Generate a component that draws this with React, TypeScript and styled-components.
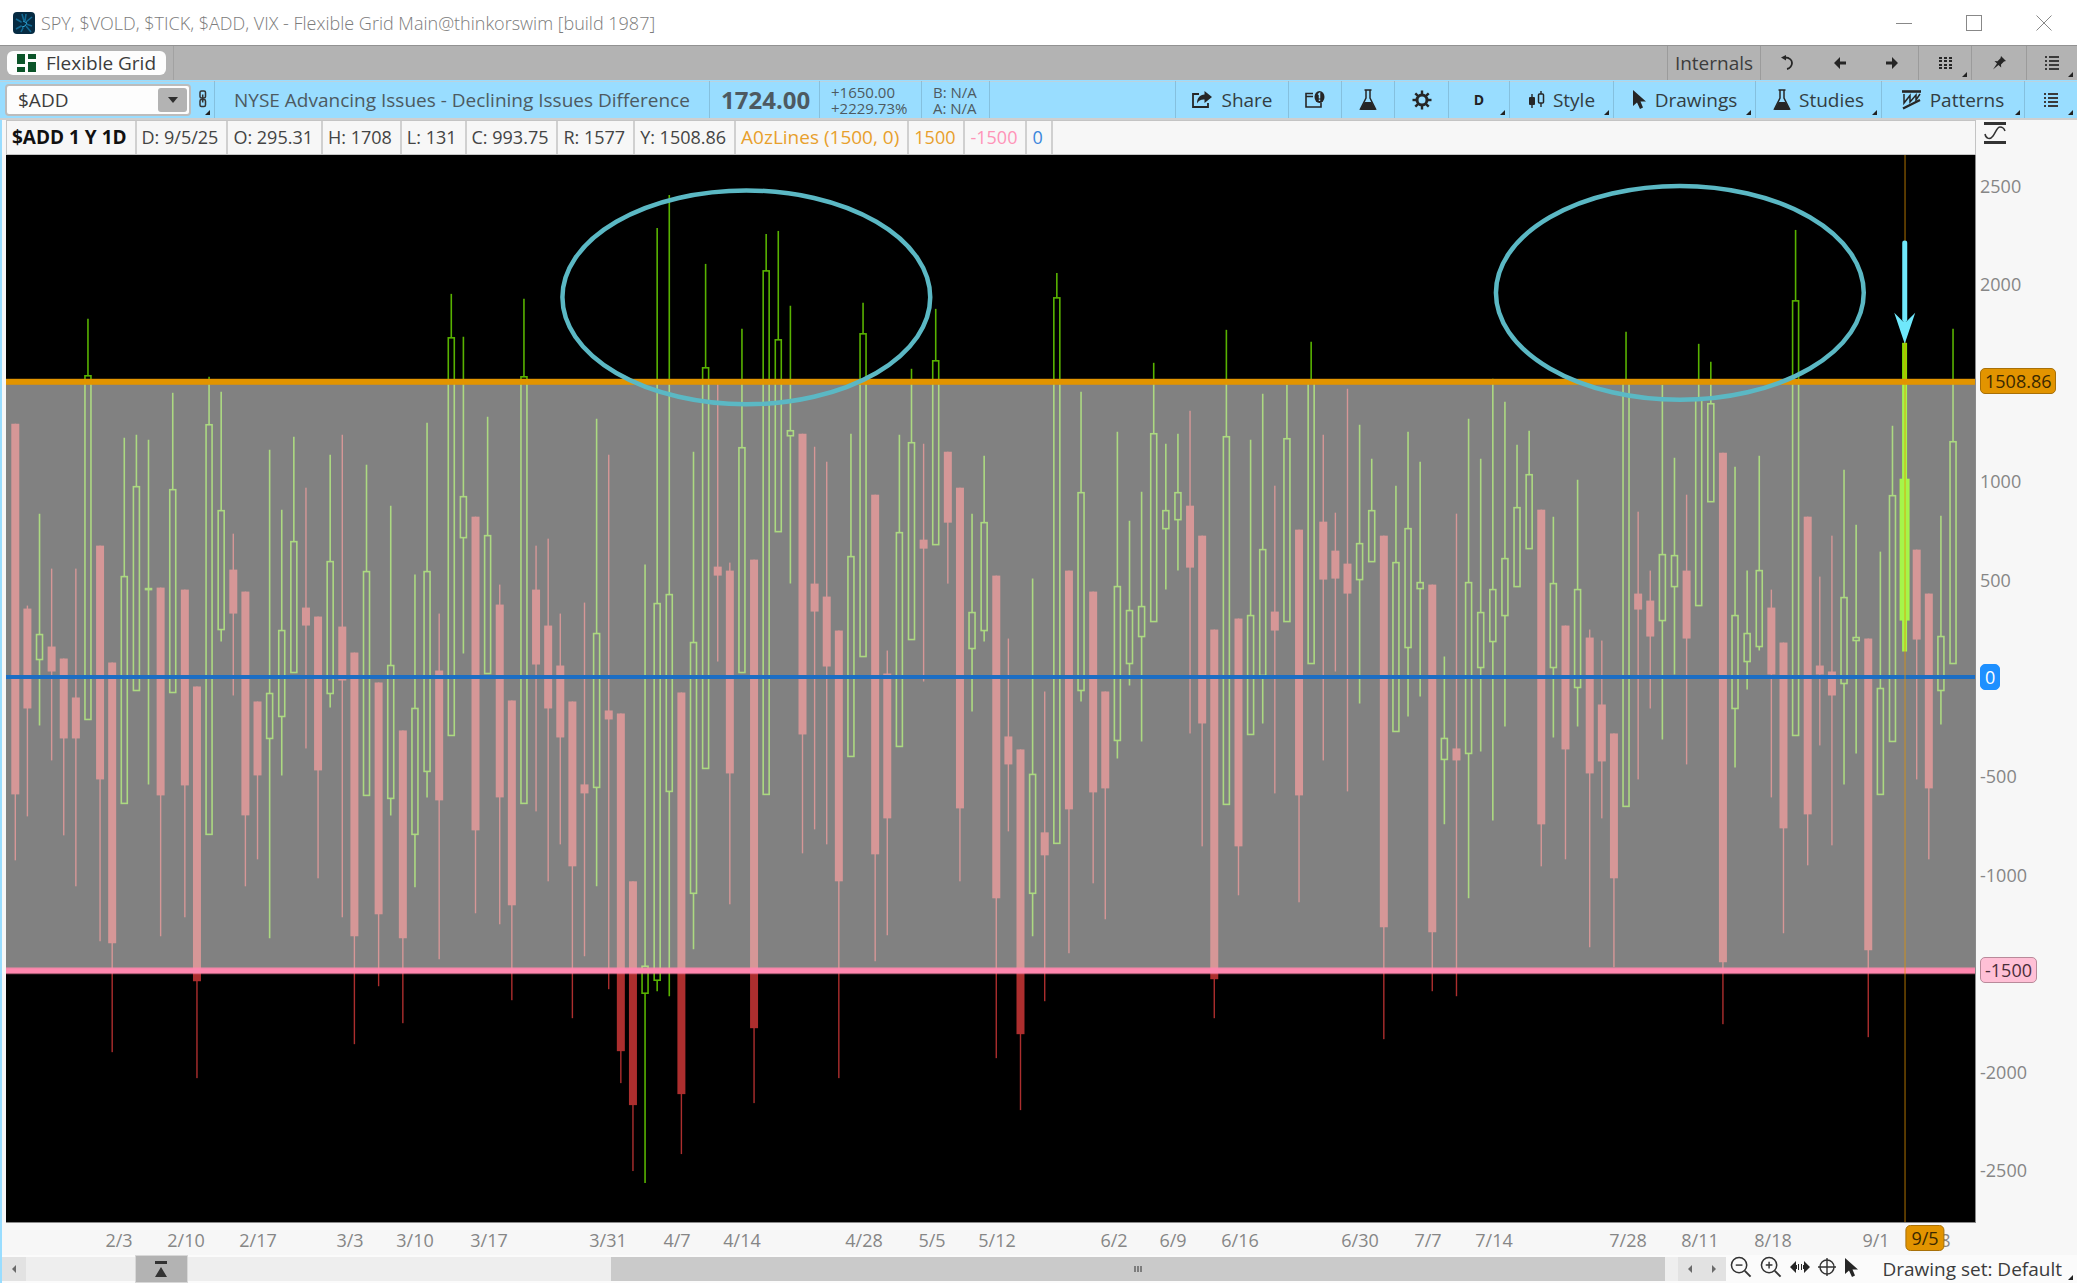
import React from "react";
import styled, { createGlobalStyle } from "styled-components";

const Global = createGlobalStyle`
  * { box-sizing: border-box; }
  html, body { margin: 0; height: 100%; }
  body { font-family: "Open Sans", "Noto Sans", sans-serif; font-size: 19px; color: #3c3c3c; background: #f7f7f7; overflow: hidden; }
  button, input { font: inherit; color: inherit; margin: 0; padding: 0; border: 0; background: none; }
  svg { display: block; flex: none; }
`;

const Window = styled.div`
  display: grid;
  grid-template-rows: 45px 35px 40px minmax(0, 1fr) 28px;
  height: 100vh;
`;

const TitleBar = styled.header`
  display: flex;
  align-items: center;
  padding: 0 25px 0 13px;
  gap: 6px;
  background: #fff;
  color: #7c7c7c;
`;
const Title = styled.h1`
  flex: 1;
  margin: 0;
  font-size: 18px;
  font-weight: 300;
  white-space: nowrap;
`;
const WindowButtons = styled.div`
  display: flex;
  gap: 54px;
  button { display: flex; }
`;

const TabBar = styled.nav`
  display: flex;
  background: #b3b3b3;
  border-top: 1px solid #929292;
`;
const TabHolder = styled.div`
  display: flex;
  align-items: center;
  padding: 0 7px;
  border-right: 1px solid #a2a2a2;
`;
const Tab = styled.button`
  display: flex;
  align-items: center;
  gap: 10px;
  height: 24px;
  padding: 0 10px;
  border-radius: 6px;
  background: #fdfdfd;
  line-height: 24px;
`;
const Spacer = styled.div`
  flex: 1;
`;
const BarButton = styled.button<{ $w: number; $line?: boolean }>`
  position: relative;
  display: flex;
  align-items: center;
  justify-content: center;
  width: ${(p) => p.$w}px;
  border-left: 1px solid ${(p) => (p.$line ? "rgba(0,0,0,0.13)" : "transparent")};
  white-space: nowrap;
`;
const Corner = styled.span`
  position: absolute;
  right: 4px;
  bottom: 3px;
  width: 0;
  height: 0;
  border-left: 5px solid transparent;
  border-bottom: 5px solid #222;
`;

const Toolbar = styled.div`
  display: flex;
  background: #99ddff;
  border-top: 1px solid #99ddff;
  border-bottom: 2px solid #cfcfcf;
  box-shadow: inset 0 1px 0 #b9d3e0;
`;
const SymbolBox = styled.div`
  display: flex;
  align-self: center;
  width: 186px;
  height: 32px;
  margin-left: 5px;
  padding: 2px;
  border: 2px solid #bcbcbc;
  border-radius: 4px;
  background: #fdfdfd;
  input { flex: 1; width: 0; padding-left: 9px; outline: 0; }
  button { display: grid; place-items: center; width: 29px; border-radius: 3px; background: #b3b3b3; }
`;
const Quote = styled.div<{ $w: number; $size?: number; $bold?: boolean }>`
  display: flex;
  flex-direction: column;
  justify-content: center;
  width: ${(p) => p.$w}px;
  padding-left: ${(p) => (p.$w > 300 ? 19 : 11)}px;
  border-left: 1px solid rgba(0, 0, 0, 0.13);
  font-size: ${(p) => p.$size ?? 19}px;
  font-weight: ${(p) => (p.$bold ? 700 : 400)};
  line-height: ${(p) => (p.$size === 15 ? "16px" : "32px")};
  white-space: nowrap;
  color: #4d5a61;
`;
const Tools = styled.div`
  display: flex;
`;
const Label = styled.span`
  margin-left: 8px;
  color: #333d42;
`;

const Body = styled.main`
  display: grid;
  grid-template-columns: minmax(0, 1fr) 101px;
  grid-template-rows: 35px minmax(0, 1fr) 32px;
  padding-left: 4px;
  border-left: 2px solid #99ddff;
  font-size: 18px;
`;
const Legend = styled.div`
  display: flex;
  border: 1px solid #c4c4c4;
`;
const LegendCell = styled.span<{ $color?: string; $bold?: boolean; $wide?: boolean }>`
  padding: 0 8px 0 5px;
  border-right: 2px solid #d0d0d0;
  line-height: 33px;
  font-size: ${(p) => (p.$wide ? 19 : 18)}px;
  color: ${(p) => p.$color ?? "#444"};
  font-weight: ${(p) => (p.$bold ? 700 : 400)};
  white-space: nowrap;
`;
const AxisHead = styled.div`
  padding: 2px 0 0 8px;
`;
const Plot = styled.div`
  border: 0 solid #8a8a8a;
  border-width: 0 1px 1px 0;
  background: #000;
  min-height: 0;
  svg { width: 100%; height: 100%; }
`;
const PriceAxis = styled.div`
  position: relative;
`;
const DateAxis = styled.div`
  position: relative;
  grid-column: 1 / -1;
`;
const Tick = styled.span`
  position: absolute;
  left: 4px;
  transform: translateY(-50%);
  line-height: 24px;
  color: #868686;
`;
const Badge = styled(Tick)<{ $bg: string; $fg: string; $edge: string }>`
  padding: 0 4px;
  border: 1px solid ${(p) => p.$edge};
  border-radius: 5px;
  background: ${(p) => p.$bg};
  color: ${(p) => p.$fg};
`;
const DateTick = styled.span`
  position: absolute;
  top: 5px;
  transform: translateX(-50%);
  line-height: 24px;
  color: #868686;
`;
const DateBadge = styled(DateTick)`
  top: 2px;
  padding: 0 5px;
  border: 1px solid #a87008;
  border-radius: 5px;
  background: #e29400;
  color: #3a2800;
`;

const Footer = styled.footer`
  display: flex;
  align-items: center;
  border-left: 2px solid #99ddff;
  background: #fbfbfb;
`;
const ScrollEnd = styled.button`
  display: grid;
  place-items: center;
  width: 24px;
  height: 24px;
  background: #e2e2e2;
`;
const Track = styled.div`
  display: flex;
  flex: 1;
  height: 24px;
  background: #eee;
`;
const Gap = styled.div<{ $grow: number }>`
  flex: ${(p) => p.$grow} 0 0;
`;
const PaneButton = styled.button`
  display: grid;
  place-items: center;
  align-self: center;
  width: 53px;
  height: 28px;
  border: 1px solid #d8d8d8;
  background: #b3b3b3;
`;
const Thumb = styled.div`
  display: flex;
  flex: 1056 0 0;
  align-items: center;
  justify-content: center;
  gap: 1px;
  background: #cacaca;
  i { width: 2px; height: 6px; background: #7d7d7d; }
`;
const FooterTools = styled.div`
  display: flex;
  align-items: center;
  gap: 8px;
  padding: 0 23px 4px 4px;
`;
const DrawingSet = styled.button`
  position: relative;
  height: 28px;
  padding-right: 15px;
  line-height: 28px;
  white-space: nowrap;
`;

/* ---------- icons ---------- */

const INK = "#262626";

const AppLogo = () => (
  <svg width="22" height="22" viewBox="0 0 22 22">
    <rect width="22" height="22" rx="4" fill="#062b42" />
    <path d="M11 9 9 2M12 9l1-7M10 11 3 7M13 10l6-5M10 13l-7 4M11 14l-3 6M13 12l6 2M13 14l5 6" stroke="#126a94" strokeWidth="1.6" />
    <path d="M9 8l6 3-4 5-3-3z" fill="#062b42" />
    <path d="M10 9l4 2-2 3-3 1" stroke="#2fa6d6" strokeWidth="1" fill="none" />
  </svg>
);
const GridLogo = () => (
  <svg width="19" height="18" viewBox="0 0 19 18">
    <path fill="#0b5429" d="M0 0h8v10H0zM11 0h8v5h-8zM11 8h8v10h-8zM0 13h8v5H0z" />
  </svg>
);
const Undo = () => (
  <svg width="14" height="16" viewBox="0 0 14 16">
    <path d="M5 2.5c5 0 7 3 7 5.500s-2 5.500-5 6" fill="none" stroke={INK} strokeWidth="1.800" />
    <path d="M1 2.500 6 0v5.500z" fill={INK} />
  </svg>
);
const Arrow = ({ right }: { right?: boolean }) => (
  <svg width="14" height="12" viewBox="0 0 14 12">
    <path d={right ? "M13 6 7 0v4.500H1v3h6V12z" : "M1 6l6-6v4.500h6v3H7V12z"} fill={INK} />
  </svg>
);
const Dots = () => (
  <svg width="13" height="13" viewBox="0 0 13 13" fill={INK}>
    {[0, 5, 10].map((x) => [0, 3, 7, 10].map((y) => <rect key={`${x}-${y}`} x={x} y={y} width="3" height="2" />))}
  </svg>
);
const Pin = () => (
  <svg width="14" height="14" viewBox="0 0 14 14">
    <path d="M9 0l5 5-2 .5-3 3 .2 3L6.500 9 1 13.500 5 7.500 2.500 5l3 .2 3-3z" fill={INK} />
  </svg>
);
const ListIcon = () => (
  <svg width="15" height="14" viewBox="0 0 15 14" fill="#3a3a3a">
    {[0, 4, 8, 12].map((y) => (
      <g key={y}>
        <rect x="0" y={y} width="2" height="2" />
        <rect x="4" y={y} width="10" height="2" />
      </g>
    ))}
  </svg>
);
const Link = () => (
  <svg width="10" height="20" viewBox="0 0 10 20" fill="none" stroke="#333" strokeWidth="1.500">
    <rect x="2" y="1" width="5.500" height="7" rx="1.500" />
    <rect x="2" y="9.500" width="5.500" height="7" rx="1.500" />
    <path d="M4.700 4.500v8" />
  </svg>
);
const Share = () => (
  <svg width="22" height="18" viewBox="0 0 22 18">
    <path d="M8 3H2v13h15v-4" fill="none" stroke={INK} strokeWidth="1.800" />
    <path d="M13.500 0 21 6l-7.500 6V8.500C10 8.300 7.500 9.500 6 12.500 6 7 9 3.800 13.500 3.500z" fill={INK} />
  </svg>
);
const Alert = () => (
  <svg width="22" height="18" viewBox="0 0 22 18">
    <path d="M9 2.500H2v13.500h15v-4.500M2 5.500h7" fill="none" stroke={INK} strokeWidth="1.600" />
    <ellipse cx="15.500" cy="6" rx="5" ry="6" fill={INK} />
    <path d="M14 3.500l1.500-1V7.500M15.500 8.500V10" fill="none" stroke="#99ddff" strokeWidth="1.500" />
  </svg>
);
const Flask = () => (
  <svg width="18" height="22" viewBox="0 0 18 22">
    <path d="M5.500 1h7M7 1v8l-5.500 11h15L11 9V1" fill="none" stroke={INK} strokeWidth="1.500" />
    <path d="M5.500 13h7L17 21H1z" fill={INK} />
  </svg>
);
const Gear = () => (
  <svg width="20" height="20" viewBox="0 0 20 20">
    <circle cx="10" cy="10" r="5" fill="none" stroke={INK} strokeWidth="3" />
    {[0, 45, 90, 135, 180, 225, 270, 315].map((a) => (
      <rect key={a} x="8.800" y=".5" width="2.400" height="4.500" fill={INK} transform={`rotate(${a} 10 10)`} />
    ))}
  </svg>
);
const DayGlyph = styled.b`
  font-size: 14px;
  color: #222;
`;
const StyleIcon = () => (
  <svg width="17" height="18" viewBox="0 0 17 18">
    <path d="M4 3v14M13 0v3m0 9v4" stroke={INK} strokeWidth="1.400" />
    <rect x="1" y="6" width="6" height="8" rx="1" fill={INK} />
    <rect x="10.500" y="3" width="5" height="9" rx="1" fill="none" stroke={INK} strokeWidth="1.500" />
  </svg>
);
const Cursor = () => (
  <svg width="15" height="19" viewBox="0 0 15 19">
    <path d="M1 0v16l4-3.500L8 19l3-1.500L8.500 11.500H14z" fill={INK} />
  </svg>
);
const PatternsIcon = () => (
  <svg width="20" height="20" viewBox="0 0 20 20" fill="none" stroke={INK}>
    <path d="M0 1.500h19" strokeWidth="2.600" />
    <path d="M2 4v9L8 5.500v6.500L14 5v5l4-6" strokeWidth="1.500" />
    <path d="M1 18.500 18 10" strokeWidth="2.400" />
  </svg>
);
const ScaleIcon = () => (
  <svg width="22" height="22" viewBox="0 0 22 22" fill="none" stroke="#333">
    <path d="M0 1.500h22M0 20.500h22" strokeWidth="3" />
    <path d="M1 12c1 5 5 6 8 2s4-9 7-9 4 1 5 4" strokeWidth="1.500" />
  </svg>
);
const Zoom = ({ plus }: { plus?: boolean }) => (
  <svg width="22" height="22" viewBox="0 0 23 23" fill="none" stroke="#333">
    <circle cx="9.500" cy="9.500" r="8" strokeWidth="1.600" />
    <path d="m15.500 15.500 6 6" strokeWidth="2" />
    <path d={plus ? "M6 9.500h7M9.500 6v7" : "M6 9.500h7"} strokeWidth="1.500" />
  </svg>
);
const Expand = () => (
  <svg width="20" height="12" viewBox="0 0 20 12" fill={INK}>
    <path d="M0 6l6-6v12zM20 6l-6-6v12zM6 4h1v4H6zM8 3h1v6H8zM11 3h1v6h-1zM13 4h1v4h-1z" />
  </svg>
);
const Crosshair = () => (
  <svg width="18" height="18" viewBox="0 0 18 18" fill="none" stroke="#333" strokeWidth="1.400">
    <circle cx="9" cy="9" r="7" />
    <path d="M9 0v18M0 9h18" />
  </svg>
);
const Triangle = ({ d, fill }: { d: string; fill?: string }) => (
  <svg width="12" height="12" viewBox="0 0 12 12">
    <path d={d} fill={fill ?? "#2e2e2e"} />
  </svg>
);

/* ---------- chart data ---------- */

/* colour, then high, body top, body bottom, low as plot ordinates */
const CANDLES = `
r 424 424 795 861|r 606 609 709 817|g 514 635 660 726|r 569 647 672 761|r 659 659 739 836|r 569 698 739 887
g 319 376 720 720|r 546 546 780 942|r 663 663 944 1053|g 438 577 804 804|g 435 487 691 691|g 440 589 590 785
r 588 588 796 937|g 393 490 693 693|r 590 590 786 918|r 687 687 982 1079|g 377 425 835 835|g 392 511 630 642
r 534 570 614 696|r 592 592 816 887|r 702 702 776 860|g 450 694 739 939|g 510 631 717 776|g 437 542 673 673
r 488 608 626 749|r 617 617 771 879|g 455 562 694 708|r 435 627 681 918|r 653 653 937 1045|g 465 572 796 796
r 683 683 915 987|g 506 666 799 816|r 731 731 939 1024|g 575 709 835 888|g 423 572 772 798|r 614 671 801 960
g 294 338 736 736|g 337 497 538 654|r 517 517 831 914|g 417 536 674 674|r 585 605 798 925|r 701 701 906 1001
g 299 377 804 804|r 546 590 665 812|r 539 626 709 882|r 614 666 738 845|r 702 702 867 1019|r 603 785 794 957
g 419 634 788 887|r 455 711 720 990|r 714 714 1052 1084|r 882 882 1106 1172|g 565 967 994 1184|g 228 604 981 992
g 195 595 792 997|r 693 693 1095 1155|g 452 643 894 950|g 264 368 769 769|r 383 567 576 662|r 563 571 774 905
g 329 448 673 673|r 560 560 1029 1104|g 234 271 795 795|g 231 340 532 532|g 306 431 436 584|r 434 434 735 854
r 447 584 612 830|r 462 597 667 845|r 631 631 882 1079|g 434 557 757 757|g 303 334 657 657|r 495 495 855 962
r 651 674 819 936|g 435 533 747 747|g 369 443 640 640|r 444 540 549 682|g 309 361 545 545|r 452 452 523 584
r 488 488 809 882|g 514 613 649 712|g 456 523 631 642|r 576 576 899 1059|r 639 737 765 832|r 750 750 1035 1111
g 579 775 894 937|r 692 833 856 1002|g 273 298 844 844|r 571 571 810 954|g 392 493 691 702|r 592 592 793 884
r 692 692 789 920|g 432 587 741 759|g 521 611 664 686|g 492 607 637 742|g 363 434 622 622|g 444 511 529 590
g 434 493 520 571|r 411 506 568 734|r 536 536 724 847|r 630 630 980 1019|g 330 437 805 805|r 619 619 847 896
g 440 616 735 735|g 394 550 676 724|r 486 612 631 794|g 385 439 622 622|r 530 530 796 903|g 342 382 664 664
r 435 522 580 761|r 513 551 579 672|r 389 564 594 792|g 425 544 580 704|g 459 511 562 562|r 536 536 928 1040
g 486 563 732 732|g 432 529 648 717|g 462 583 589 697|r 585 585 933 992|g 657 739 760 825|r 514 749 761 997
g 419 583 754 899|g 459 613 668 752|g 379 590 642 821|g 402 559 616 727|g 445 508 587 587|g 431 475 549 549
r 510 510 825 867|g 517 584 668 738|r 626 626 750 860|g 480 590 688 727|r 630 638 774 948|r 641 705 762 819
r 734 734 879 968|g 332 382 807 807|r 512 594 610 780|r 571 601 637 709|g 385 555 621 740|g 458 556 587 675
r 495 571 639 765|g 344 400 606 606|g 362 404 502 502|r 453 453 963 1025|g 467 616 709 768|g 571 634 662 690
g 456 571 647 651|r 590 608 675 798|r 643 643 829 934|g 230 301 736 736|r 517 517 815 866|r 577 666 675 746
r 536 672 696 846|g 470 598 684 785|g 525 638 641 754|r 639 639 951 1038|g 552 689 795 795|g 426 496 742 742
h 343 479 621 652|r 550 550 640 780|r 594 594 789 860|g 516 637 691 725|g 329 442 664 664`
  .trim()
  .split(/[|\n]/)
  .map((row) => {
    const [kind, ...n] = row.split(" ");
    const [high, top, bottom, low] = n.map(Number);
    return { kind, high, top, bottom, low };
  });

const slotX = (i: number) => 15.3 + i * 12.117;

const RED = "#ac2e2e";
const GREEN = "#58b200";

const Chart = () => (
  <svg viewBox="6 155 1970 1068" preserveAspectRatio="none" role="img" aria-label="$ADD daily candles">
    {CANDLES.map((c, i) => {
      const x = slotX(i);
      if (c.kind === "r")
        return (
          <g key={i} fill={RED}>
            <rect x={x - 0.7} y={c.high} width="1.4" height={c.low - c.high} />
            <rect x={x - 4} y={c.top} width="8" height={c.bottom - c.top} />
          </g>
        );
      if (c.kind === "g")
        return (
          <g key={i} fill="none" stroke={GREEN} strokeWidth="1.600">
            <path d={`M${x} ${c.high}V${c.top}M${x} ${c.bottom}V${c.low}`} />
            <rect x={x - 3} y={c.top} width="6" height={c.bottom - c.top} />
          </g>
        );
      return null;
    })}
    <rect x="6" y="382" width="1970" height="590" fill="#fff" fillOpacity="0.505" />
    <rect x="6" y="675.500" width="1970" height="4" fill="#1c6ec4" />
    <rect x="6" y="968" width="1970" height="7" fill="#ff87ae" fillOpacity="0.6" />
    <rect x="6" y="969" width="1970" height="5" fill="#ff87ae" />
    {CANDLES.map((c, i) =>
      c.kind === "h" ? (
        <g key={i}>
          <rect x={slotX(i) - 2.5} y={c.high} width="5" height={382 - c.high} fill="#8bdc00" />
          <rect x={slotX(i) - 2.5} y="382" width="5" height={c.low - 382} fill="#a5f64a" />
          <rect x={slotX(i) - 5} y={c.top} width="10" height={c.bottom - c.top} fill="#a5f64a" />
        </g>
      ) : null
    )}
    <rect x="6" y="379" width="1970" height="6" fill="#e29400" />
    <path d="M1906 155V1223" stroke="#e29400" strokeOpacity="0.55" strokeWidth="1.400" />
    <g fill="none" stroke="#5bb8c4" strokeWidth="4.500">
      <ellipse cx="746.700" cy="297.500" rx="184" ry="107" />
      <ellipse cx="1680.700" cy="293" rx="184" ry="107" />
    </g>
    <path d="M1905.700 243V320" stroke="#6fe8fb" strokeWidth="5" strokeLinecap="round" />
    <path d="M1905.700 344l-10.500-31 9 9h3l9-9z" fill="#6fe8fb" />
  </svg>
);

const PLOT_TOP = 155;
const PLOT_HEIGHT = 1068;
const priceTop = (v: number) => `${((678 - v * 0.1968 - PLOT_TOP) / PLOT_HEIGHT) * 100}%`;
const dateLeft = (x: number) => `${((x - 6) / 2071) * 100}%`;

const DATES: [string, number][] = [
  ["2/3", 119], ["2/10", 186], ["2/17", 258], ["3/3", 350], ["3/10", 415], ["3/17", 489], ["3/31", 608],
  ["4/7", 677], ["4/14", 742], ["4/28", 864], ["5/5", 932], ["5/12", 997], ["6/2", 1114], ["6/9", 1173],
  ["6/16", 1240], ["6/30", 1360], ["7/7", 1428], ["7/14", 1494], ["7/28", 1628], ["8/11", 1700],
  ["8/18", 1773], ["9/1", 1876], ["9/8", 1937],
];

const LEGEND: [string, string?][] = [
  ["D: 9/5/25"], ["O: 295.31"], ["H: 1708"], ["L: 131"], ["C: 993.75"], ["R: 1577"], ["Y: 1508.86"],
];
const STUDY_VALUES: [string, string][] = [
  ["1500", "#e8a02c"], ["-1500", "#ff94b8"], ["0", "#3c86dc"],
];

export default function App() {
  return (
    <Window>
      <Global />
      <TitleBar>
        <AppLogo />
        <Title>SPY, $VOLD, $TICK, $ADD, VIX - Flexible Grid Main@thinkorswim [build 1987]</Title>
        <WindowButtons>
          <button aria-label="Minimize">
            <svg width="16" height="16" viewBox="0 0 16 16"><path d="M0 8.500h16" stroke="#888" /></svg>
          </button>
          <button aria-label="Maximize">
            <svg width="16" height="16" viewBox="0 0 16 16"><rect x=".5" y=".5" width="15" height="15" fill="none" stroke="#888" /></svg>
          </button>
          <button aria-label="Close">
            <svg width="16" height="16" viewBox="0 0 16 16"><path d="M.5.5l15 15M15.500.5l-15 15" stroke="#888" /></svg>
          </button>
        </WindowButtons>
      </TitleBar>

      <TabBar>
        <TabHolder>
          <Tab><GridLogo />Flexible Grid</Tab>
        </TabHolder>
        <Spacer />
        <BarButton $w={93} $line>Internals</BarButton>
        <BarButton $w={53} $line aria-label="Undo"><Undo /></BarButton>
        <BarButton $w={52} aria-label="Back"><Arrow /></BarButton>
        <BarButton $w={53} aria-label="Forward"><Arrow right /></BarButton>
        <BarButton $w={53} $line aria-label="Layout"><Dots /><Corner /></BarButton>
        <BarButton $w={55} $line aria-label="Pin"><Pin /></BarButton>
        <BarButton $w={51} $line aria-label="Menu"><ListIcon /><Corner /></BarButton>
      </TabBar>

      <Toolbar>
        <SymbolBox>
          <input aria-label="Symbol" defaultValue="$ADD" />
          <button aria-label="Choose symbol"><Triangle d="M1 3h10L6 9z" /></button>
        </SymbolBox>
        <BarButton $w={23} aria-label="Link color"><Link /><Corner /></BarButton>
        <Quote $w={495}>NYSE Advancing Issues - Declining Issues Difference</Quote>
        <Quote $w={110} $size={24} $bold>1724.00</Quote>
        <Quote $w={102} $size={15}><span>+1650.00</span><span>+2229.73%</span></Quote>
        <Quote $w={68} $size={15}><span>B: N/A</span><span>A: N/A</span></Quote>
        <Quote $w={1} />
        <Spacer />
        <Tools>
          <BarButton $w={113} $line><Share /><Label>Share</Label></BarButton>
          <BarButton $w={53} $line aria-label="Alert"><Alert /></BarButton>
          <BarButton $w={53} $line aria-label="Edit studies"><Flask /></BarButton>
          <BarButton $w={54} $line aria-label="Settings"><Gear /></BarButton>
          <BarButton $w={61} $line aria-label="Day timeframe"><DayGlyph>D</DayGlyph><Corner /></BarButton>
          <BarButton $w={104} $line><StyleIcon /><Label>Style</Label><Corner /></BarButton>
          <BarButton $w={142} $line><Cursor /><Label>Drawings</Label><Corner /></BarButton>
          <BarButton $w={126} $line><Flask /><Label>Studies</Label><Corner /></BarButton>
          <BarButton $w={143} $line><PatternsIcon /><Label>Patterns</Label><Corner /></BarButton>
          <BarButton $w={53} $line aria-label="Chart menu"><ListIcon /><Corner /></BarButton>
        </Tools>
      </Toolbar>

      <Body>
        <Legend>
          <LegendCell $bold $wide $color="#111">$ADD 1 Y 1D</LegendCell>
          {LEGEND.map(([text]) => (
            <LegendCell key={text}>{text}</LegendCell>
          ))}
          <LegendCell $wide $color="#e8a02c">A0zLines (1500, 0)</LegendCell>
          {STUDY_VALUES.map(([text, color]) => (
            <LegendCell key={text} $color={color}>{text}</LegendCell>
          ))}
        </Legend>
        <AxisHead><ScaleIcon /></AxisHead>
        <Plot><Chart /></Plot>
        <PriceAxis>
          {[2500, 2000, 1000, 500, -500, -1000, -2000, -2500].map((v) => (
            <Tick key={v} style={{ top: priceTop(v) }}>{v}</Tick>
          ))}
          <Badge $bg="#e29400" $fg="#3a2800" $edge="#a87008" style={{ top: priceTop(1508.86) }}>1508.86</Badge>
          <Badge $bg="#1e90ff" $fg="#fff" $edge="#1e90ff" style={{ top: priceTop(6) }}>0</Badge>
          <Badge $bg="#ffc0d6" $fg="#4a2c38" $edge="#b98a9a" style={{ top: priceTop(-1485) }}>-1500</Badge>
        </PriceAxis>
        <DateAxis>
          {DATES.map(([text, x]) => (
            <DateTick key={text} style={{ left: dateLeft(x) }}>{text}</DateTick>
          ))}
          <DateBadge style={{ left: dateLeft(1925) }}>9/5</DateBadge>
        </DateAxis>
      </Body>

      <Footer>
        <ScrollEnd aria-label="Scroll left"><Triangle d="M8 2v8L4 6z" fill="#6a6a6a" /></ScrollEnd>
        <Track>
          <Gap $grow={109} />
          <PaneButton aria-label="Toggle pane">
            <svg width="12" height="18" viewBox="0 0 12 18"><path d="M0 1h12v3H0zM6 7l6 10H0z" fill="#333" /></svg>
          </PaneButton>
          <Gap $grow={424} />
          <Thumb><i /><i /><i /></Thumb>
          <Gap $grow={13} />
        </Track>
        <ScrollEnd aria-label="Step left"><Triangle d="M8 2v8L4 6z" fill="#6a6a6a" /></ScrollEnd>
        <ScrollEnd aria-label="Step right"><Triangle d="M4 2v8l4-4z" fill="#6a6a6a" /></ScrollEnd>
        <FooterTools>
          <button aria-label="Zoom out"><Zoom /></button>
          <button aria-label="Zoom in"><Zoom plus /></button>
          <button aria-label="Expand"><Expand /></button>
          <button aria-label="Crosshair"><Crosshair /></button>
          <button aria-label="Pointer"><Cursor /></button>
        </FooterTools>
        <DrawingSet>Drawing set: Default<Corner /></DrawingSet>
      </Footer>
    </Window>
  );
}
